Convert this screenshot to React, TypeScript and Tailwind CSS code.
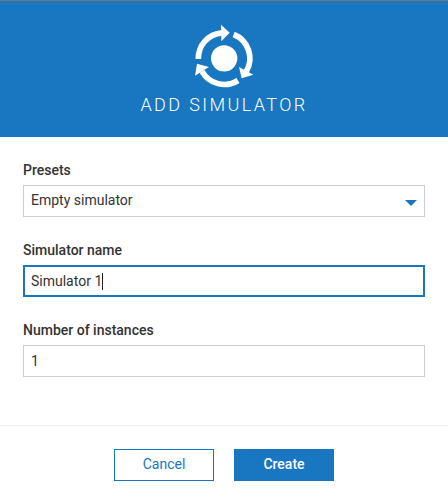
import type { ReactNode } from "react";

function SimulatorIcon() {
  return (
    <svg className="h-20 w-20 shrink-0" viewBox="0 0 240 240" fill="none">
      <circle cx="120.5" cy="127" r="39.5" fill="white" />
      <g stroke="white" strokeWidth="17">
        <path d="M43 129A77 77 0 0 1 114 50.5" />
        <path d="M149 55.500A77 77 0 0 1 187 166" />
        <path d="M162 193.500A77 77 0 0 1 54 166" />
      </g>
      <g fill="white">
        <path d="M111 26L137 50L112 76Z" />
        <path d="M165 153L208 176L173 187Z" />
        <path d="M39 143L75 153L33 179Z" />
      </g>
    </svg>
  );
}

function Field({ label, children }: { label: string; children: ReactNode }) {
  return (
    <div className="flex flex-col gap-[5px]">
      <label className="text-sm leading-5 font-medium">{label}</label>
      {children}
    </div>
  );
}

export default function App() {
  return (
    <div className="flex h-[504px] w-[448px] flex-col overflow-hidden bg-white font-['Roboto',sans-serif] text-sm text-[#333]">
      <header className="flex h-[137px] shrink-0 flex-col items-center border-t border-[#777] bg-[#1976c0] pt-[15px] text-white">
        <SimulatorIcon />
        <h1 className="-mt-[3px] text-lg leading-6 font-light tracking-[2.4px]">ADD SIMULATOR</h1>
      </header>
      <main className="flex h-[288px] shrink-0 flex-col gap-[23px] px-[23px] pt-[23px]">
        <Field label="Presets">
          <div className="flex h-8 items-center justify-between border border-[#cbcfd3] pr-[7px] pl-[7px]">
            <span className="pb-[2px]">Empty simulator</span>
            <svg className="mt-[3px] h-[6px] w-3" viewBox="0 0 12 6">
              <path d="M0 0H12L6 6Z" fill="#1976c0" />
            </svg>
          </div>
        </Field>
        <Field label="Simulator name">
          <div className="flex h-8 items-center border-2 border-[#1976c0] pl-[6px]">
            <span>Simulator 1</span>
            <span className="h-[17px] w-px bg-[#222]" />
          </div>
        </Field>
        <Field label="Number of instances">
          <div className="flex h-8 items-center border border-[#cbcfd3] pl-[7px]">
            <span>1</span>
          </div>
        </Field>
      </main>
      <footer className="flex grow items-start justify-center gap-5 border-t border-[#eeeff0] pt-[23px]">
        <button className="h-8 w-[100px] border border-[#1976c0] pb-[2px] text-[#1976c0]">Cancel</button>
        <button className="h-8 w-[100px] bg-[#1976c0] pb-[2px] font-medium text-white">Create</button>
      </footer>
    </div>
  );
}
